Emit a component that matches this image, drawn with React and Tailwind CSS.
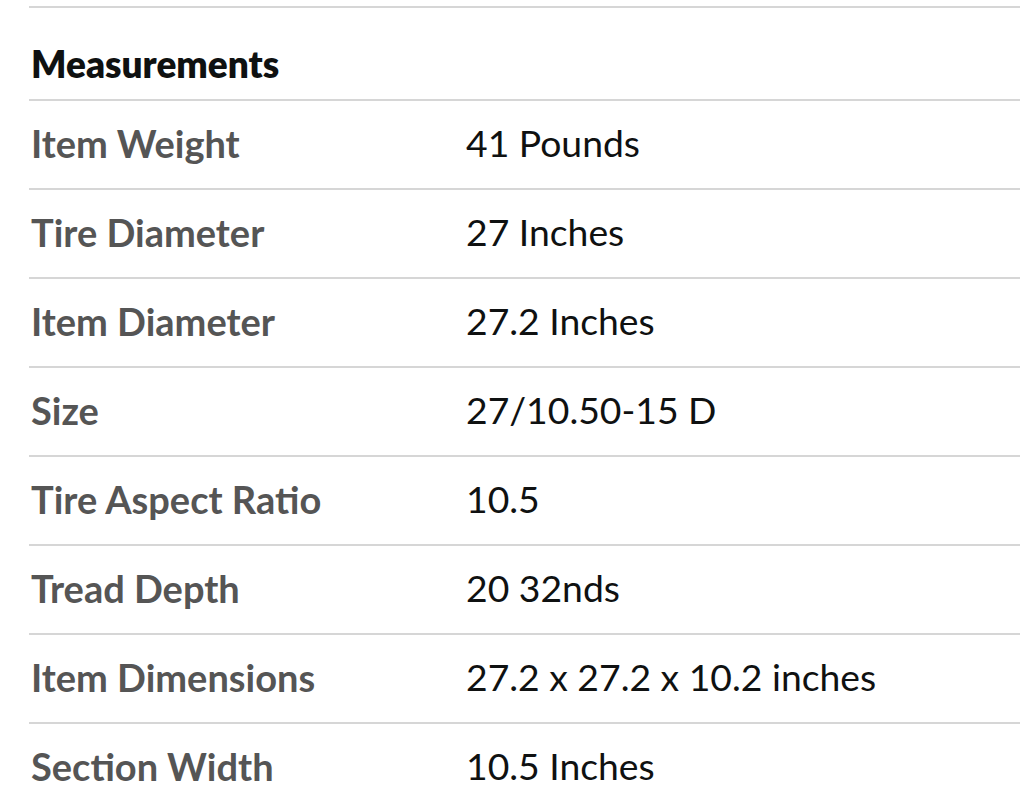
import React from 'react'

const rows = [
  ['Item Weight', '41 Pounds'],
  ['Tire Diameter', '27 Inches'],
  ['Item Diameter', '27.2 Inches'],
  ['Size', '27/10.50-15 D'],
  ['Tire Aspect Ratio', '10.5'],
  ['Tread Depth', '20 32nds'],
  ['Item Dimensions', '27.2 x 27.2 x 10.2 inches'],
  ['Section Width', '10.5 Inches'],
]

export default function App() {
  return (
    <div className="bg-white pl-[29px] pt-[6px] font-['Lato',sans-serif] overflow-hidden h-[808px]">
      <div className="border-t-2 border-[#d6d6d6] h-[93px] flex items-center pt-[20px]">
        <h2 className="pl-[2px] text-[37px] font-extrabold text-[#0f1111] leading-none">Measurements</h2>
      </div>
      {rows.map(([label, value]) => (
        <div key={label} className="border-t-2 border-[#d6d6d6] h-[89px] flex items-center pb-[3px]">
          <div className="w-[437px] pl-[2px] text-[38px] font-bold text-[#555555] leading-none">{label}</div>
          <div className="text-[37.3px] text-[#0f1111] leading-none">{value}</div>
        </div>
      ))}
    </div>
  )
}
